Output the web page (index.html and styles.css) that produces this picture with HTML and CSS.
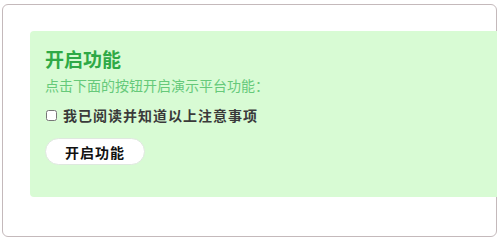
FILE: index.html
```html
<!DOCTYPE html>
<html lang="zh-CN">
<head>
<meta charset="utf-8">
<link rel="stylesheet" href="styles.css">
</head>
<body>
<div class="frame">
  <div class="panel">
    <h2 class="title">开启功能</h2>
    <p class="desc">点击下面的按钮开启演示平台功能：</p>
    <label class="agree"><input type="checkbox" class="check"><span>我已阅读并知道以上注意事项</span></label>
    <button class="btn" type="button">开启功能</button>
  </div>
</div>
</body>
</html>
```
FILE: styles.css
```css
html, body {
  margin: 0;
  padding: 0;
  background: #ffffff;
}
body {
  font-family: "Noto Sans CJK SC", "Noto Sans", sans-serif;
}
.frame {
  box-sizing: border-box;
  width: 495px;
  height: 233px;
  margin: 4px 0 0 2px;
  border: 1px solid #c4b9bb;
  border-radius: 6px;
  padding: 26px 0 0 27px;
}
.panel {
  box-sizing: border-box;
  width: 467px;
  height: 166px;
  background: #d8fbd4;
  border-radius: 4px 0 0 4px;
  padding: 16px 0 0 15px;
  display: flex;
  flex-direction: column;
  align-items: flex-start;
}
.title {
  margin: 0;
  font-size: 19px;
  line-height: 24px;
  font-weight: bold;
  color: #2fa946;
}
.desc {
  margin: 4px 0 0;
  font-size: 14px;
  line-height: 20px;
  color: #66c97a;
}
.agree {
  display: flex;
  align-items: center;
  margin-top: 10px;
  font-size: 14px;
  line-height: 20px;
  font-weight: bold;
  color: #3a3a3a;
  letter-spacing: 1px;
}
.check {
  width: 11px;
  height: 11px;
  margin: 0 6px 0 1px;
}
.btn {
  margin-top: 13px;
  width: 100px;
  height: 27px;
  border: 1px solid #dfe8df;
  border-radius: 14px;
  background: #ffffff;
  font-family: "Noto Sans CJK SC", "Noto Sans", sans-serif;
  font-size: 14px;
  font-weight: bold;
  color: #111111;
  letter-spacing: 1px;
  padding: 0;
}
```
